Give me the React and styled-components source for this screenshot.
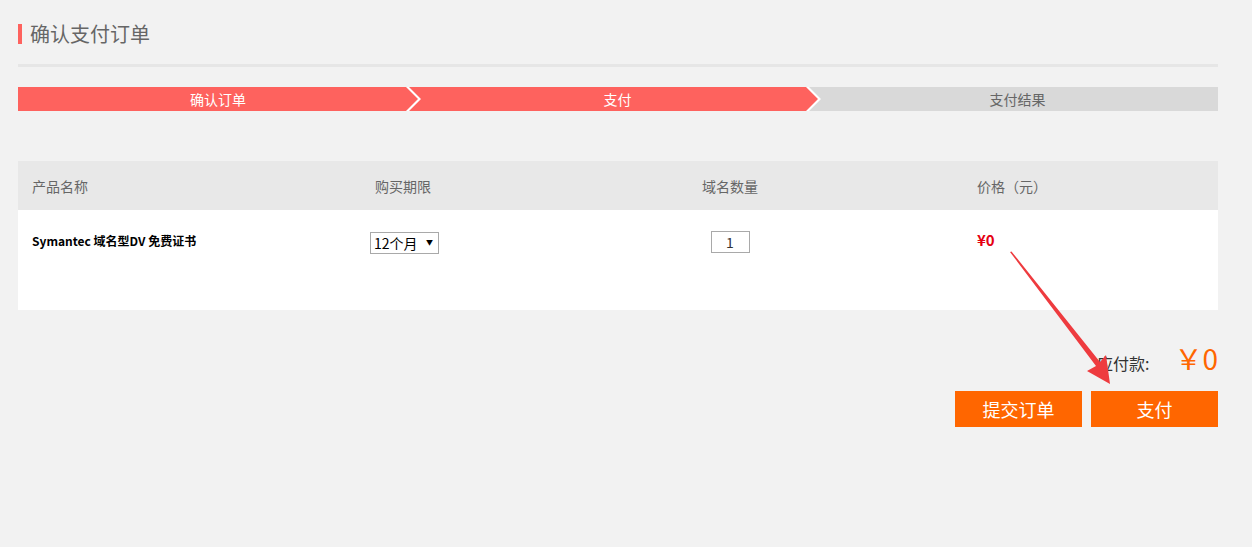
import React from "react";
import styled, { createGlobalStyle } from "styled-components";

const Global = createGlobalStyle`
  html, body { margin: 0; padding: 0; background: #f2f2f2; }
  body { font-family: "Microsoft YaHei", "Noto Sans CJK SC", "Noto Sans", sans-serif; }
  * { box-sizing: border-box; }
`;

const Page = styled.div`
  position: relative;
  width: 1252px;
  min-height: 547px;
  padding: 24px 0 0 18px;
`;

const Content = styled.div`
  width: 1200px;
`;

const Title = styled.h1`
  margin: 0;
  height: 20px;
  border-left: 4px solid #fe625e;
  padding-left: 8px;
  font-size: 20px;
  line-height: 20px;
  font-weight: normal;
  color: #666;
`;

const Divider = styled.div`
  margin-top: 20px;
  height: 3px;
  background: #e6e6e6;
`;

const Steps = styled.div`
  margin-top: 20px;
  height: 24px;
  display: flex;
  background: #fff;
`;

const Step = styled.div`
  flex: none;
  width: ${(p) => p.$w}px;
  margin-left: ${(p) => (p.$first ? 0 : -9)}px;
  padding-left: ${(p) => (p.$first ? 0 : 8)}px;
  height: 24px;
  line-height: 24px;
  text-align: center;
  font-size: 14px;
  color: ${(p) => (p.$active ? "#fff" : "#666")};
  background: ${(p) => (p.$active ? "#fe625e" : "#d9d9d9")};
  clip-path: ${(p) => p.$clip};
`;

const Table = styled.div`
  margin-top: 50px;
`;

const Cols = `grid-template-columns: 343px 136px 466px 255px;`;

const HeadRow = styled.div`
  display: grid;
  ${Cols}
  height: 49px;
  align-items: center;
  background: #e8e8e8;
`;

const Th = styled.div`
  padding-left: ${(p) => (p.$center ? 0 : 14)}px;
  text-align: ${(p) => (p.$center ? "center" : "left")};
  font-size: 14px;
  color: #666;
  line-height: 20px;
`;

const BodyRow = styled.div`
  display: grid;
  ${Cols}
  height: 100px;
  align-items: start;
  background: #fff;
  padding-top: 21px;
`;

const Td = styled.div`
  display: flex;
  justify-content: ${(p) => (p.$center ? "center" : "flex-start")};
  padding-left: ${(p) => p.$pl ?? 14}px;
  margin-top: ${(p) => p.$mt ?? 0}px;
`;

const ProductName = styled.div`
  font-size: 12px;
  font-weight: bold;
  color: #000;
  line-height: 18px;
`;

const SelectWrap = styled.div`
  position: relative;
  width: 69px;
  height: 22px;
`;

const Select = styled.select`
  display: block;
  margin: 0;
  appearance: none;
  -webkit-appearance: none;
  width: 69px;
  height: 22px;
  border: 1px solid #a9a9a9;
  border-radius: 0;
  background: #fff;
  padding: 0 0 0 3px;
  font-family: inherit;
  font-size: 14px;
  line-height: 20px;
  color: #000;
  outline: none;
`;

const Caret = styled.span`
  position: absolute;
  right: 6px;
  top: 6px;
  font-size: 7px;
  line-height: 8px;
  color: #000;
  pointer-events: none;
`;

const Qty = styled.input`
  display: block;
  margin: 0;
  width: 39px;
  height: 22px;
  border: 1px solid #a9a9a9;
  border-radius: 0;
  text-align: center;
  font-family: inherit;
  font-size: 14px;
  color: #333;
  padding: 0;
  outline: none;
  background: #fff;
`;

const Price = styled.div`
  font-size: 15px;
  font-weight: bold;
  color: #e50012;
  line-height: 18px;
  font-family: "SimSun", "Noto Sans CJK SC", sans-serif;
`;

const Summary = styled.div`
  margin-top: 30px;
  display: flex;
  justify-content: flex-end;
  align-items: baseline;
  height: 36px;
`;

const SumLabel = styled.span`
  font-size: 16px;
  color: #333;
`;

const SumValue = styled.span`
  margin-left: 25px;
  font-size: 28px;
  line-height: 36px;
  color: #ff6600;
`;

const Actions = styled.div`
  margin-top: 15px;
  display: flex;
  justify-content: flex-end;
  gap: 9px;
`;

const Button = styled.button`
  width: 127px;
  height: 36px;
  border: none;
  border-radius: 0;
  background: #ff6600;
  color: #fff;
  font-family: inherit;
  font-size: 18px;
  cursor: pointer;
  padding: 0;
`;

const Overlay = styled.svg`
  position: absolute;
  left: 0;
  top: 0;
  pointer-events: none;
`;

export default function App() {
  return (
    <>
      <Global />
      <Page>
        <Content>
          <Title>确认支付订单</Title>
          <Divider />
          <Steps>
            <Step
              $first
              $active
              $w={400}
              $clip="polygon(0 0, 388px 0, 400px 12px, 388px 24px, 0 24px)"
            >
              确认订单
            </Step>
            <Step
              $active
              $w={409}
              $clip="polygon(0 0, 397px 0, 409px 12px, 397px 24px, 0 24px, 12px 12px)"
            >
              支付
            </Step>
            <Step
              $w={409}
              $clip="polygon(0 0, 100% 0, 100% 100%, 0 100%, 12px 12px)"
            >
              支付结果
            </Step>
          </Steps>
          <Table>
            <HeadRow>
              <Th>产品名称</Th>
              <Th>购买期限</Th>
              <Th $center>域名数量</Th>
              <Th>价格（元）</Th>
            </HeadRow>
            <BodyRow>
              <Td $mt={1}>
                <ProductName>Symantec 域名型DV 免费证书</ProductName>
              </Td>
              <Td $pl={9} $mt={1}>
                <SelectWrap>
                  <Select defaultValue="12">
                    <option value="12">12个月</option>
                  </Select>
                  <Caret>▼</Caret>
                </SelectWrap>
              </Td>
              <Td $center $pl={0}>
                <Qty defaultValue="1" />
              </Td>
              <Td>
                <Price>¥0</Price>
              </Td>
            </BodyRow>
          </Table>
          <Summary>
            <SumLabel>应付款:</SumLabel>
            <SumValue>￥0</SumValue>
          </Summary>
          <Actions>
            <Button>提交订单</Button>
            <Button>支付</Button>
          </Actions>
        </Content>
        <Overlay width="1252" height="547" viewBox="0 0 1252 547">
          <polygon
            points="1010,252 1011.5,251.5 1100,362 1106,355 1110,384 1087,371 1096,366"
            fill="#ee3b3f"
          />
        </Overlay>
      </Page>
    </>
  );
}
